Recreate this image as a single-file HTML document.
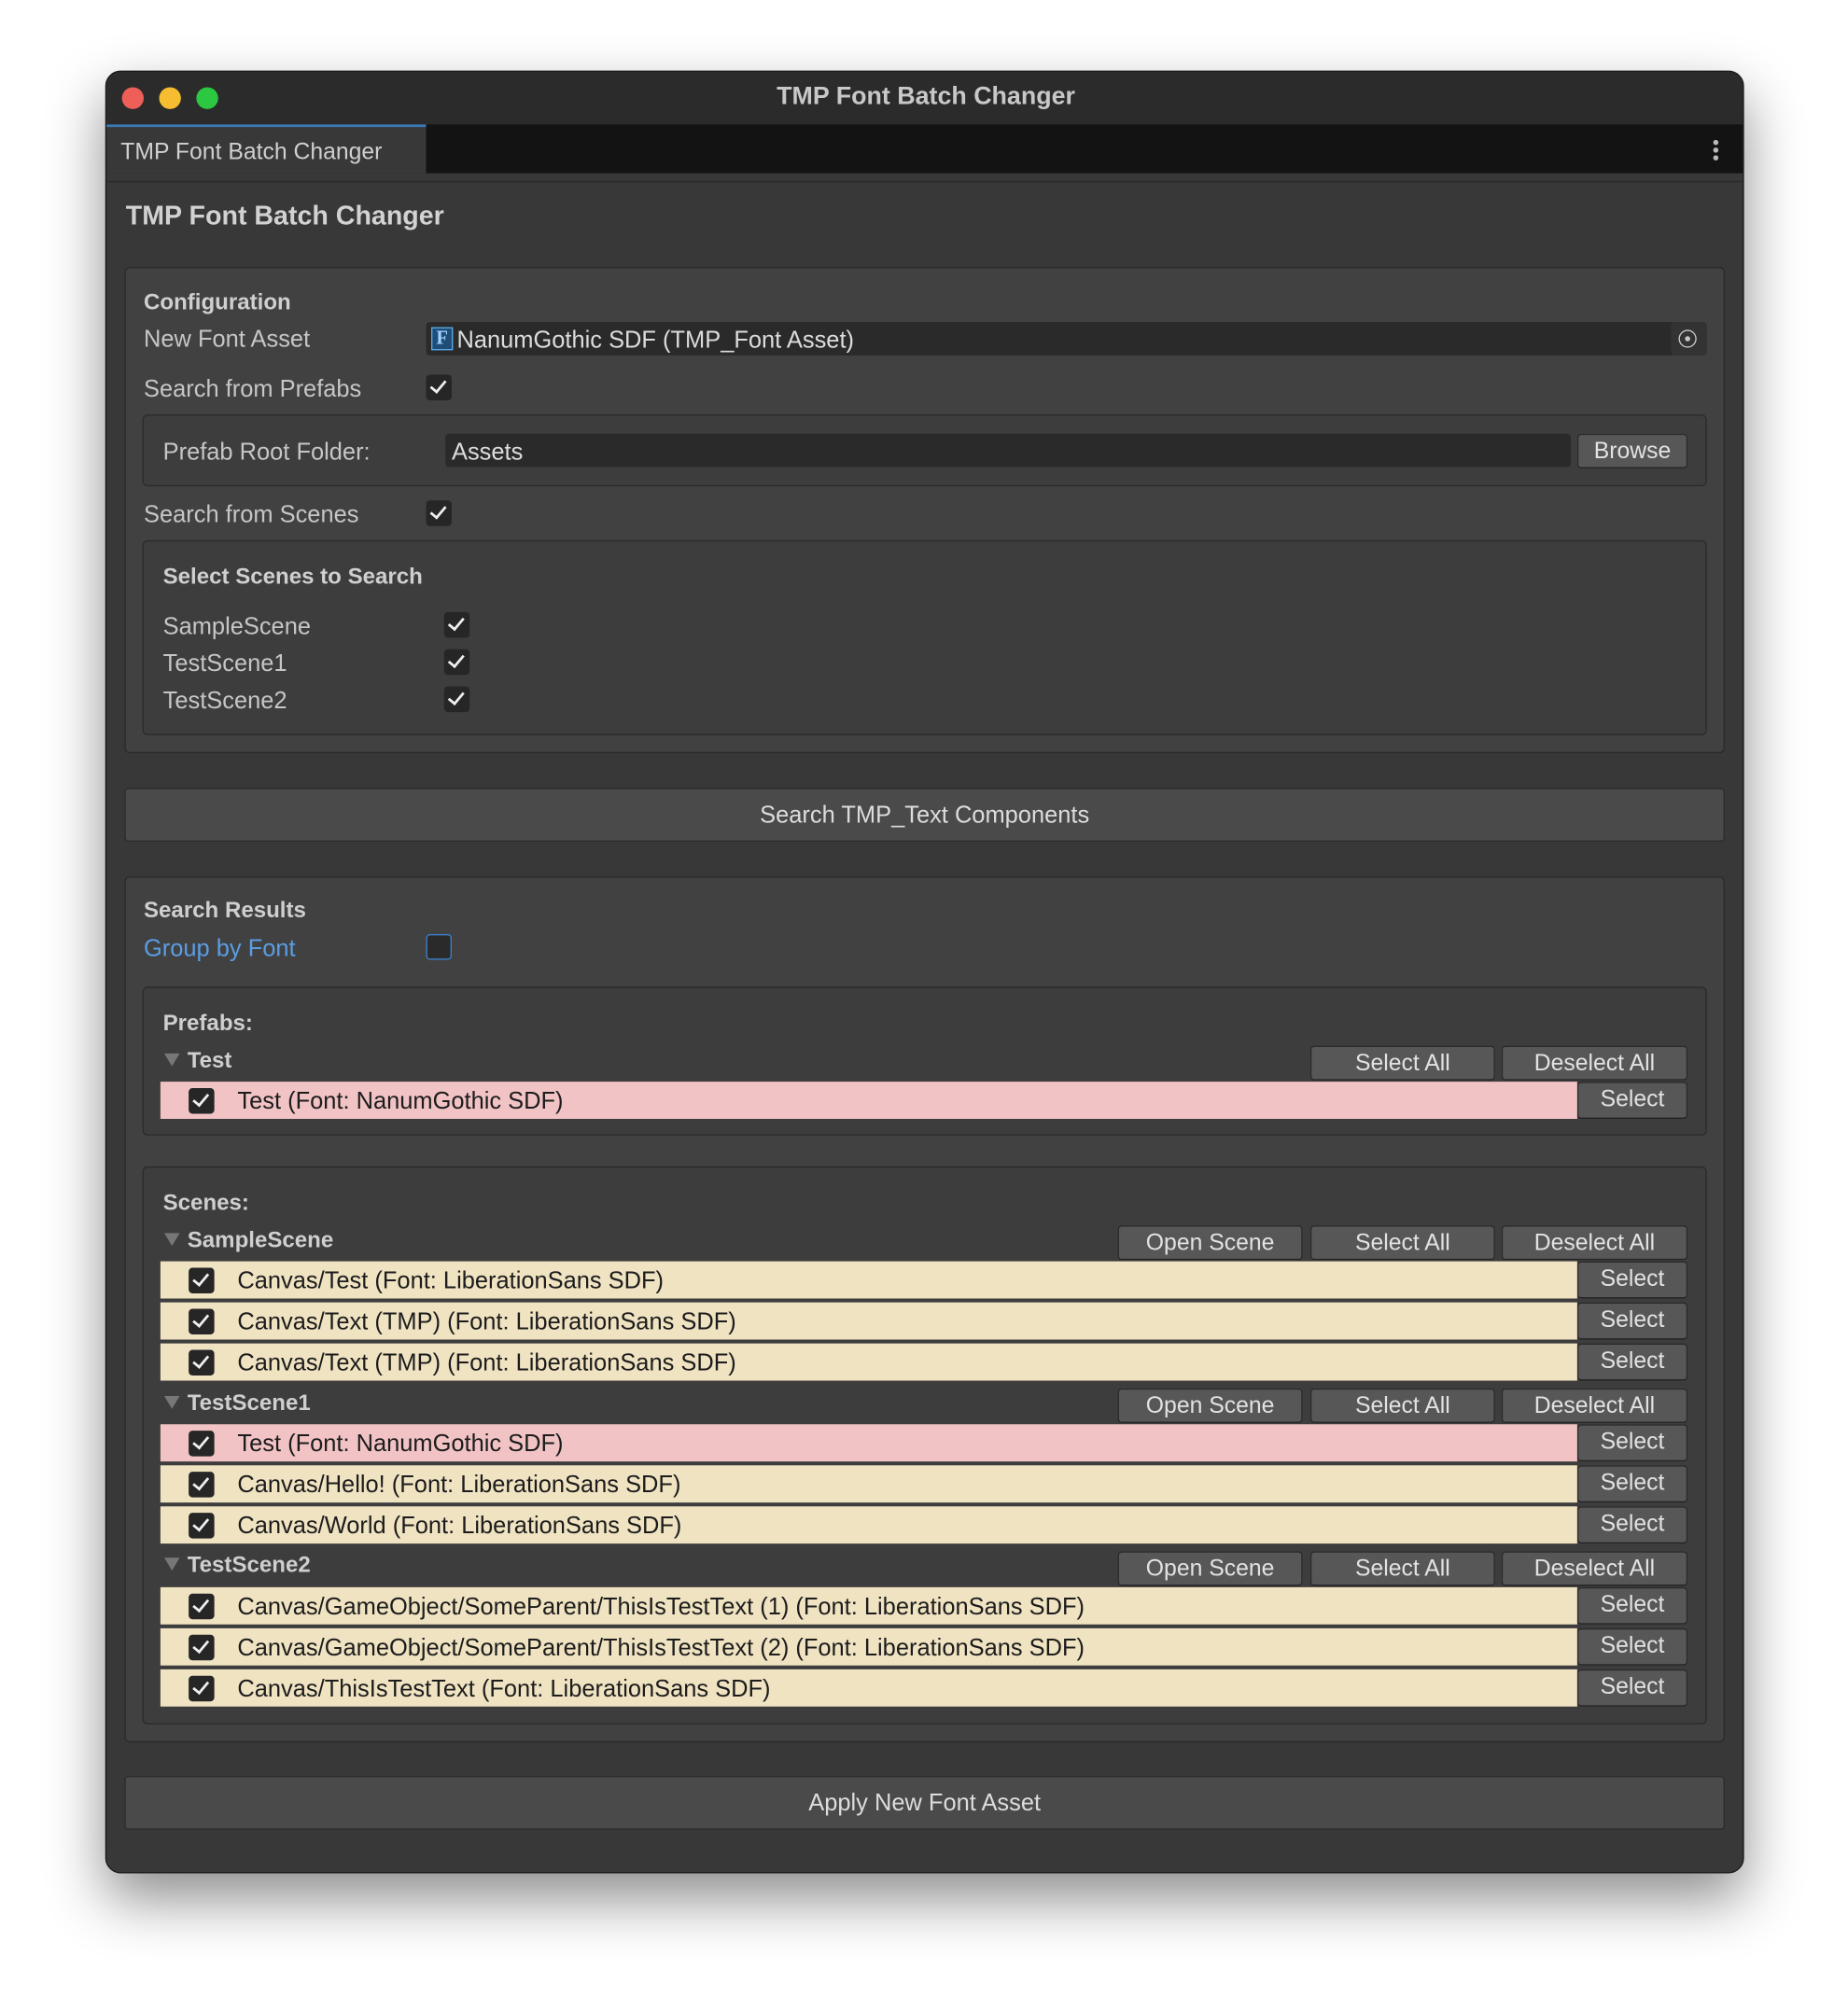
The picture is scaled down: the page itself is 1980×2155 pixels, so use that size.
<!DOCTYPE html>
<html><head><meta charset="utf-8"><style>
html,body{margin:0;padding:0;background:#fff;width:1980px;height:2154px;overflow:hidden}
#s{position:absolute;left:0;top:0;width:1440px;height:1567px;transform:scale(1.375);transform-origin:0 0;font-family:"Liberation Sans",sans-serif}
div,span{position:absolute;box-sizing:border-box}
.win{left:82px;top:55px;width:1277px;height:1405px;background:#383838;border-radius:12px;border:1px solid #1a1a1a;box-shadow:0 20px 45px rgba(0,0,0,.45);overflow:hidden}
.t{font-size:18.5px;color:#c6c6c6;white-space:nowrap;line-height:20px}
.b{font-weight:bold;color:#cfcfcf;font-size:17.5px}
.box{background:#414141;border:1px solid #2a2a2a;border-radius:4px}
.sub{background:#3d3d3d;border:1px solid #2b2b2b;border-radius:4px}
.cb{width:20px;height:20px;background:#262626;border-radius:3px}
.cb:after{content:"";position:absolute;left:6px;top:2px;width:5px;height:10px;border:solid #f0f0f0;border-width:0 2px 2px 0;transform:rotate(40deg)}
.btn{background:#575757;border:1px solid #2a2a2a;border-bottom-color:#222;border-radius:3px;color:#e2e2e2;font-size:18px;text-align:center;line-height:25px;height:27px;white-space:nowrap}
.big{background:#4a4a4a;border:1px solid #2c2c2c;border-radius:3px;color:#dcdcdc;font-size:18.5px;text-align:center;line-height:40px;height:42px;left:97px;width:1247px}
.row{left:125px;width:1104px;height:29px;background:#f0e3c2}
.row.p{background:#f2c3c5}
.row .cb{left:22px;top:5px}
.row .tx{left:60px;top:4px;font-size:18.5px;color:#1c1c1c;white-space:nowrap}
.sel{left:1229px;width:86px}
.tri{width:0;height:0;border-left:6px solid transparent;border-right:6px solid transparent;border-top:10px solid #777}
</style></head><body><div id="s">
<div class="win">
 <div style="left:0;top:0;width:1277px;height:41px;background:#2b2b2b"></div>
 <div style="left:12px;top:12px;width:17px;height:17px;border-radius:50%;background:#ee5f57"></div>
 <div style="left:41px;top:12px;width:17px;height:17px;border-radius:50%;background:#f5bd2f"></div>
 <div style="left:70px;top:12px;width:17px;height:17px;border-radius:50%;background:#2cc841"></div>
 <div class="t b" style="left:0;width:1277px;text-align:center;top:9px;font-size:19.5px;color:#c8c8c8">TMP Font Batch Changer</div>
 <div style="left:0;top:41px;width:1277px;height:38px;background:#131313"></div>
 <div style="left:0;top:41px;width:249px;height:38px;background:#383838;border-top:2px solid #3b78b5"></div>
 <div class="t" style="left:11px;top:52px;color:#d0d0d0;font-size:18px">TMP Font Batch Changer</div>
 <div style="left:1252px;top:53px;width:4px;height:4px;border-radius:50%;background:#bbb"></div>
 <div style="left:1252px;top:59px;width:4px;height:4px;border-radius:50%;background:#bbb"></div>
 <div style="left:1252px;top:65px;width:4px;height:4px;border-radius:50%;background:#bbb"></div>
 <div style="left:0;top:85px;width:1277px;height:1px;background:#2a2a2a"></div>
</div>
<div class="t b" style="left:98px;top:159px;font-size:20.8px;color:#d2d2d2">TMP Font Batch Changer</div>

<div class="box" style="left:97px;top:208px;width:1247px;height:379px"></div>
<div class="t b" style="left:112px;top:225px">Configuration</div>
<div class="t" style="left:112px;top:254px">New Font Asset</div>
<div style="left:332px;top:251px;width:998px;height:26px;background:#2a2a2a;border-radius:3px"></div>
<div style="left:1302px;top:251px;width:28px;height:26px;background:#333;border-radius:3px"></div>
<div style="left:1308px;top:257px;width:14px;height:14px;border:1.5px solid #c8c8c8;border-radius:50%"></div>
<div style="left:1313px;top:262px;width:4px;height:4px;background:#c8c8c8;border-radius:50%"></div>
<div style="left:336px;top:255px;width:17px;height:18px;background:#1f4d78;border:1px solid #5aa7e0;color:#9fd3ff;font-family:'Liberation Serif',serif;font-weight:bold;font-size:15px;line-height:16px;text-align:center">F</div>
<div class="t" style="left:356px;top:255px;color:#dcdcdc">NanumGothic SDF (TMP_Font Asset)</div>
<div class="t" style="left:112px;top:293px">Search from Prefabs</div>
<div class="cb" style="left:332px;top:292px"></div>
<div class="sub" style="left:111px;top:323px;width:1219px;height:56px"></div>
<div class="t" style="left:127px;top:342px">Prefab Root Folder:</div>
<div style="left:347px;top:338px;width:877px;height:26px;background:#2a2a2a;border-radius:3px"></div>
<div class="t" style="left:352px;top:342px;color:#dcdcdc">Assets</div>
<div class="btn" style="left:1229px;top:338px;width:86px">Browse</div>
<div class="t" style="left:112px;top:391px">Search from Scenes</div>
<div class="cb" style="left:332px;top:390px"></div>
<div class="sub" style="left:111px;top:421px;width:1219px;height:152px"></div>
<div class="t b" style="left:127px;top:439px">Select Scenes to Search</div>
<div class="t" style="left:127px;top:478px">SampleScene</div><div class="cb" style="left:346px;top:477px"></div>
<div class="t" style="left:127px;top:507px">TestScene1</div><div class="cb" style="left:346px;top:506px"></div>
<div class="t" style="left:127px;top:536px">TestScene2</div><div class="cb" style="left:346px;top:535px"></div>

<div class="big" style="top:614px">Search TMP_Text Components</div>

<div class="box" style="left:97px;top:683px;width:1247px;height:675px"></div>
<div class="t b" style="left:112px;top:699px">Search Results</div>
<div class="t" style="left:112px;top:729px;color:#5b9de3">Group by Font</div>
<div style="left:332px;top:728px;width:20px;height:20px;background:#2a2a2a;border:1.5px solid #3d7fcc;border-radius:3px"></div>

<div class="sub" style="left:111px;top:769px;width:1219px;height:116px"></div>
<div class="t b" style="left:127px;top:787px">Prefabs:</div>
<div class="tri" style="left:128px;top:821px"></div>
<div class="t b" style="left:146px;top:816px">Test</div>
<div class="btn" style="left:1021px;top:815px;width:144px">Select All</div>
<div class="btn" style="left:1170px;top:815px;width:145px">Deselect All</div>
<div class="row p" style="top:843px"><div class="cb"></div><div class="tx">Test (Font: NanumGothic SDF)</div></div>
<div class="btn sel" style="top:843px;height:29px">Select</div>

<div class="sub" style="left:111px;top:909px;width:1219px;height:435px"></div>
<div class="t b" style="left:127px;top:927px">Scenes:</div>

<div class="tri" style="left:128px;top:961px"></div>
<div class="t b" style="left:146px;top:956px">SampleScene</div>
<div class="btn" style="left:871px;top:955px;width:144px">Open Scene</div>
<div class="btn" style="left:1021px;top:955px;width:144px">Select All</div>
<div class="btn" style="left:1170px;top:955px;width:145px">Deselect All</div>
<div class="row" style="top:983px"><div class="cb"></div><div class="tx">Canvas/Test (Font: LiberationSans SDF)</div></div><div class="btn sel" style="top:983px;height:29px">Select</div>
<div class="row" style="top:1015px"><div class="cb"></div><div class="tx">Canvas/Text (TMP) (Font: LiberationSans SDF)</div></div><div class="btn sel" style="top:1015px;height:29px">Select</div>
<div class="row" style="top:1047px"><div class="cb"></div><div class="tx">Canvas/Text (TMP) (Font: LiberationSans SDF)</div></div><div class="btn sel" style="top:1047px;height:29px">Select</div>

<div class="tri" style="left:128px;top:1088px"></div>
<div class="t b" style="left:146px;top:1083px">TestScene1</div>
<div class="btn" style="left:871px;top:1082px;width:144px">Open Scene</div>
<div class="btn" style="left:1021px;top:1082px;width:144px">Select All</div>
<div class="btn" style="left:1170px;top:1082px;width:145px">Deselect All</div>
<div class="row p" style="top:1110px"><div class="cb"></div><div class="tx">Test (Font: NanumGothic SDF)</div></div><div class="btn sel" style="top:1110px;height:29px">Select</div>
<div class="row" style="top:1142px"><div class="cb"></div><div class="tx">Canvas/Hello! (Font: LiberationSans SDF)</div></div><div class="btn sel" style="top:1142px;height:29px">Select</div>
<div class="row" style="top:1174px"><div class="cb"></div><div class="tx">Canvas/World (Font: LiberationSans SDF)</div></div><div class="btn sel" style="top:1174px;height:29px">Select</div>

<div class="tri" style="left:128px;top:1214px"></div>
<div class="t b" style="left:146px;top:1209px">TestScene2</div>
<div class="btn" style="left:871px;top:1209px;width:144px">Open Scene</div>
<div class="btn" style="left:1021px;top:1209px;width:144px">Select All</div>
<div class="btn" style="left:1170px;top:1209px;width:145px">Deselect All</div>
<div class="row" style="top:1237px"><div class="cb"></div><div class="tx">Canvas/GameObject/SomeParent/ThisIsTestText (1) (Font: LiberationSans SDF)</div></div><div class="btn sel" style="top:1237px;height:29px">Select</div>
<div class="row" style="top:1269px"><div class="cb"></div><div class="tx">Canvas/GameObject/SomeParent/ThisIsTestText (2) (Font: LiberationSans SDF)</div></div><div class="btn sel" style="top:1269px;height:29px">Select</div>
<div class="row" style="top:1301px"><div class="cb"></div><div class="tx">Canvas/ThisIsTestText (Font: LiberationSans SDF)</div></div><div class="btn sel" style="top:1301px;height:29px">Select</div>

<div class="big" style="top:1384px">Apply New Font Asset</div>
</div></body></html>
